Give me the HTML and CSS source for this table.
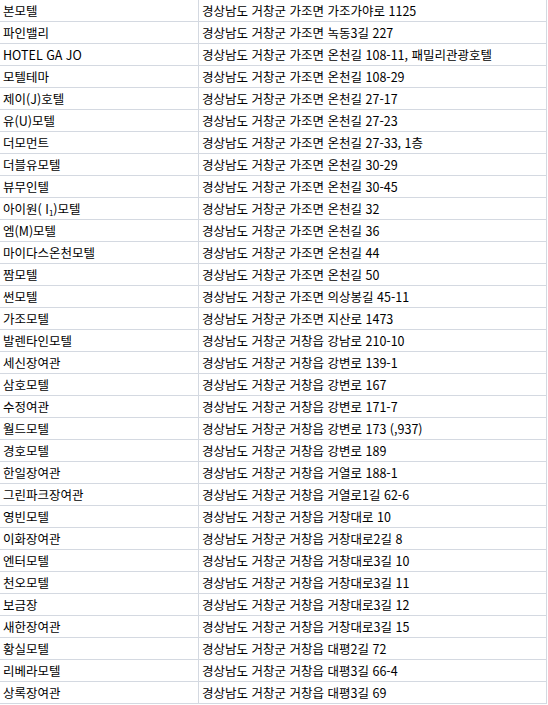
FILE: index.html
```html
<!DOCTYPE html>
<html lang="ko">
<head>
<meta charset="utf-8">
<link rel="stylesheet" href="styles.css">
</head>
<body>
<table class="sheet">
<tbody>
<tr><td class="name">본모텔</td><td class="addr">경상남도 거창군 가조면 가조가야로 1125</td></tr>
<tr><td class="name">파인밸리</td><td class="addr">경상남도 거창군 가조면 녹동3길 227</td></tr>
<tr><td class="name">HOTEL GA JO</td><td class="addr">경상남도 거창군 가조면 온천길 108-11, 패밀리관광호텔</td></tr>
<tr><td class="name">모텔테마</td><td class="addr">경상남도 거창군 가조면 온천길 108-29</td></tr>
<tr><td class="name">제이(J)호텔</td><td class="addr">경상남도 거창군 가조면 온천길 27-17</td></tr>
<tr><td class="name">유(U)모텔</td><td class="addr">경상남도 거창군 가조면 온천길 27-23</td></tr>
<tr><td class="name">더모먼트</td><td class="addr">경상남도 거창군 가조면 온천길 27-33, 1층</td></tr>
<tr><td class="name">더블유모텔</td><td class="addr">경상남도 거창군 가조면 온천길 30-29</td></tr>
<tr><td class="name">뷰무인텔</td><td class="addr">경상남도 거창군 가조면 온천길 30-45</td></tr>
<tr><td class="name">아이원( I<span class="sub">1</span>)모텔</td><td class="addr">경상남도 거창군 가조면 온천길 32</td></tr>
<tr><td class="name">엠(M)모텔</td><td class="addr">경상남도 거창군 가조면 온천길 36</td></tr>
<tr><td class="name">마이다스온천모텔</td><td class="addr">경상남도 거창군 가조면 온천길 44</td></tr>
<tr><td class="name">짬모텔</td><td class="addr">경상남도 거창군 가조면 온천길 50</td></tr>
<tr><td class="name">썬모텔</td><td class="addr">경상남도 거창군 가조면 의상봉길 45-11</td></tr>
<tr><td class="name">가조모텔</td><td class="addr">경상남도 거창군 가조면 지산로 1473</td></tr>
<tr><td class="name">발렌타인모텔</td><td class="addr">경상남도 거창군 거창읍 강남로 210-10</td></tr>
<tr><td class="name">세신장여관</td><td class="addr">경상남도 거창군 거창읍 강변로 139-1</td></tr>
<tr><td class="name">삼호모텔</td><td class="addr">경상남도 거창군 거창읍 강변로 167</td></tr>
<tr><td class="name">수정여관</td><td class="addr">경상남도 거창군 거창읍 강변로 171-7</td></tr>
<tr><td class="name">월드모텔</td><td class="addr">경상남도 거창군 거창읍 강변로 173 (,937)</td></tr>
<tr><td class="name">경호모텔</td><td class="addr">경상남도 거창군 거창읍 강변로 189</td></tr>
<tr><td class="name">한일장여관</td><td class="addr">경상남도 거창군 거창읍 거열로 188-1</td></tr>
<tr><td class="name">그린파크장여관</td><td class="addr">경상남도 거창군 거창읍 거열로1길 62-6</td></tr>
<tr><td class="name">영빈모텔</td><td class="addr">경상남도 거창군 거창읍 거창대로 10</td></tr>
<tr><td class="name">이화장여관</td><td class="addr">경상남도 거창군 거창읍 거창대로2길 8</td></tr>
<tr><td class="name">엔터모텔</td><td class="addr">경상남도 거창군 거창읍 거창대로3길 10</td></tr>
<tr><td class="name">천오모텔</td><td class="addr">경상남도 거창군 거창읍 거창대로3길 11</td></tr>
<tr><td class="name">보금장</td><td class="addr">경상남도 거창군 거창읍 거창대로3길 12</td></tr>
<tr><td class="name">새한장여관</td><td class="addr">경상남도 거창군 거창읍 거창대로3길 15</td></tr>
<tr><td class="name">황실모텔</td><td class="addr">경상남도 거창군 거창읍 대평2길 72</td></tr>
<tr><td class="name">리베라모텔</td><td class="addr">경상남도 거창군 거창읍 대평3길 66-4</td></tr>
<tr><td class="name">상록장여관</td><td class="addr">경상남도 거창군 거창읍 대평3길 69</td></tr>
</tbody>
</table>
</body>
</html>
```
FILE: styles.css
```css
html, body {
  margin: 0;
  padding: 0;
  background: #ffffff;
}
.sheet {
  border-collapse: collapse;
  table-layout: fixed;
  margin: -1px 0 0 -1px;
  font-family: "Noto Sans CJK KR", "Noto Sans", sans-serif;
  font-size: 12.5px;
  color: #000000;
}
.sheet td {
  border: 1px solid #d4d9e1;
  height: 22px;
  padding: 0 0 0 3px;
  line-height: 21px;
  white-space: nowrap;
  overflow: hidden;
  box-sizing: border-box;
}
.name {
  width: 199px;
}
.addr {
  width: 348px;
}
.sub {
  font-size: 8px;
  vertical-align: -2px;
  line-height: 0;
}
```
